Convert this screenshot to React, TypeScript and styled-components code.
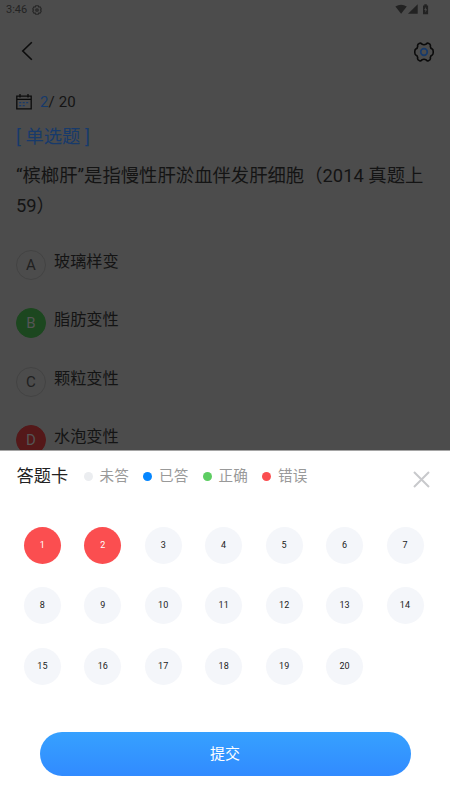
import React from "react";
import styled, { createGlobalStyle } from "styled-components";

const GlobalStyle = createGlobalStyle`
  * { box-sizing: border-box; }
  body { margin: 0; background: #4c4c4c; font-family: Roboto, "Noto Sans CJK SC", sans-serif; }
`;

const Screen = styled.div`
  width: 450px;
  height: 800px;
  overflow: hidden;
  display: flex;
  flex-direction: column;
  background: #4c4c4c;
`;

const Page = styled.main`
  height: 450px;
  flex: none;
  overflow: hidden;
`;

const StatusBar = styled.header`
  height: 19px;
  padding: 0 20px 0 6px;
  display: flex;
  align-items: center;
  color: #232323;
  font-size: 11px;
  svg { display: block; }
`;

const StatusGear = styled.svg`
  margin-left: 4.5px;
`;

const StatusIcons = styled.svg`
  margin-left: auto;
`;

const NavBar = styled.nav`
  height: 65px;
  padding: 0 16px 0 21px;
  display: flex;
  align-items: center;
  justify-content: space-between;
  svg { display: block; }
`;

const BackIcon = styled.svg`
  margin-bottom: 1px;
`;

const Progress = styled.div`
  height: 37px;
  padding: 0 16px 1px;
  display: flex;
  align-items: center;
  color: #141414;
  font-size: 15px;
  letter-spacing: 0.1px;
  svg { margin-right: 8px; }
`;

const Current = styled.span`
  color: #173a6b;
`;

const Kind = styled.div`
  height: 30px;
  padding-left: 16px;
  line-height: 32px;
  font-size: 18.35px;
  color: #173a6b;
`;

const Question = styled.p`
  margin: 10px 0 0;
  padding: 0 16px;
  font-size: 18.35px;
  line-height: 30px;
  color: #141414;
  white-space: nowrap;
`;

const Options = styled.div`
  margin-top: 29px;
  padding-left: 16px;
`;

const Option = styled.div`
  height: 58.3px;
  display: flex;
`;

const optionFill = { plain: "transparent", right: "#1c471f", wrong: "#541819" };

const Letter = styled.span<{ $kind: keyof typeof optionFill }>`
  width: 30px;
  height: 30px;
  border-radius: 50%;
  border: 1px solid ${(p) => (p.$kind === "plain" ? "#434343" : optionFill[p.$kind])};
  background: ${(p) => optionFill[p.$kind]};
  color: ${(p) => (p.$kind === "plain" ? "#202020" : "#555")};
  display: flex;
  align-items: center;
  justify-content: center;
  font-size: 15px;
`;

const OptionText = styled.span`
  margin-left: 8px;
  height: 24px;
  line-height: 24.6px;
  font-size: 16.2px;
  color: #141414;
`;

const Sheet = styled.section`
  flex: 1;
  background: #fff;
  border-top: 1px solid #a5a5a5;
`;

const SheetHead = styled.div`
  height: 50px;
  padding: 0 20.5px 0 16.5px;
  display: flex;
  align-items: center;
`;

const Title = styled.h2`
  margin: 0 16px 0 0;
  font-size: 17.2px;
  line-height: 24px;
  font-weight: 400;
  color: #222;
`;

const LegendItem = styled.span`
  width: 59.5px;
  display: flex;
  align-items: center;
  font-size: 14.6px;
  line-height: 20px;
  color: #999;
  white-space: nowrap;
`;

const Dot = styled.i<{ $color: string }>`
  width: 9px;
  height: 9px;
  flex: none;
  margin: 1px 7px 0 -0.5px;
  border-radius: 50%;
  background: ${(p) => p.$color};
`;

const Close = styled.svg`
  margin: 7px 0 0 auto;
`;

const Grid = styled.div`
  margin: 25.6px 0 0 23.9px;
  display: grid;
  grid-template-columns: repeat(7, 37px);
  column-gap: 23.45px;
  row-gap: 23.5px;
`;

const Cell = styled.span<{ $wrong: boolean }>`
  height: 37px;
  border-radius: 50%;
  display: flex;
  align-items: center;
  justify-content: center;
  padding-bottom: 1px;
  font-size: 9px;
  letter-spacing: 0.1px;
  background: ${(p) => (p.$wrong ? "#fb4e50" : "#f4f6fa")};
  color: ${(p) => (p.$wrong ? "#fff" : "#222")};
`;

const Submit = styled.button`
  display: block;
  width: 371px;
  height: 44.6px;
  margin: 47.1px 0 0 39.5px;
  padding: 0;
  border: 0;
  border-radius: 23px;
  background: linear-gradient(#36a1ff, #318bff);
  color: #fff;
  font: 400 15px/22px Roboto, "Noto Sans CJK SC", sans-serif;
`;

const options: { letter: string; text: string; kind: keyof typeof optionFill }[] = [
  { letter: "A", text: "玻璃样变", kind: "plain" },
  { letter: "B", text: "脂肪变性", kind: "right" },
  { letter: "C", text: "颗粒变性", kind: "plain" },
  { letter: "D", text: "水泡变性", kind: "wrong" },
];

const legend = [
  ["未答", "#ebedf0"],
  ["已答", "#0586ff"],
  ["正确", "#5dcd62"],
  ["错误", "#fb4e50"],
];

export default function App() {
  return (
    <>
      <GlobalStyle />
      <Screen>
        <Page>
          <StatusBar>
            3:46
            <StatusGear width="10" height="10" viewBox="0 0 10 10" fill="none" stroke="#262626">
              <path d="M3.7.8h2.6l.4 1.2 1.4-.1 1.2 2-.8 1.1.8 1.1-1.2 2-1.4-.1-.4 1.2H3.7L3.3 8l-1.4.1-1.2-2L1.5 5 .7 3.9l1.2-2 1.4.1Z" strokeWidth="1.1" />
              <circle cx="5" cy="5" r="1.2" strokeWidth="1.3" />
            </StatusGear>
            <StatusIcons width="35" height="11" viewBox="0 0 35 11" fill="#222">
              <path d="M.4 2.5Q6 -1.2 11.8 2.5L6.1 9.7Z" />
              <path d="M22.7.2v9.6H13Z" />
              <path d="M28 1.4h1.3V.2h2.5v1.2h1.3v8.9H28Z" />
              <path d="m31 2.7-1.8 3.2h1.2v2.7L32 5.3h-1.2Z" fill="#4c4c4c" />
            </StatusIcons>
          </StatusBar>
          <NavBar>
            <BackIcon width="12" height="20" viewBox="0 0 12 20" fill="none" stroke="#0c0c0c" strokeWidth="1.6">
              <path d="M10.8 1.2 1.8 10l9 8.8" />
            </BackIcon>
            <svg width="20" height="20" viewBox="1 0 20 20" fill="none">
              <path
                d="M6.6 1.2Q7.8.7 8.7 2Q11 3.4 13.3 2Q14.2.7 15.4 1.2Q18 2.2 17.3 4.4Q17.4 6.3 19.2 7Q20.3 7.6 20.2 10Q20.3 12.4 19.2 13Q17.4 13.7 17.3 15.6Q18 17.8 15.4 18.8Q14.2 19.3 13.3 18Q11 16.6 8.7 18Q7.8 19.3 6.6 18.8Q4 17.8 4.7 15.6Q4.6 13.7 2.8 13Q1.7 12.4 1.8 10Q1.7 7.6 2.8 7Q4.6 6.3 4.7 4.4Q4 2.2 6.6 1.2Z"
                stroke="#0b0b0b"
                strokeWidth="1.6"
              />
              <circle cx="11" cy="10" r="3.3" stroke="#173a6b" strokeWidth="1.7" />
            </svg>
          </NavBar>
          <Progress>
            <svg width="16" height="16" viewBox="0 0 16 16" fill="none">
              <path d="M.8 2.2h14.4v12.6H.8ZM.8 5.4h14.4M4 0v3.5M12 0v3.5" stroke="#0b0b0b" strokeWidth="1.3" />
              <path d="M3.2 8.6h9.4M3.2 11.6h6" stroke="#173a6b" strokeWidth="1.4" strokeDasharray="2 1.5" />
            </svg>
            <Current>2</Current>/ 20
          </Progress>
          <Kind>[ 单选题 ]</Kind>
          <Question>
            “槟榔肝”是指慢性肝淤血伴发肝细胞（2014 真题上
            <br />
            59）
          </Question>
          <Options>
            {options.map((o) => (
              <Option key={o.letter}>
                <Letter $kind={o.kind}>{o.letter}</Letter>
                <OptionText>{o.text}</OptionText>
              </Option>
            ))}
          </Options>
        </Page>
        <Sheet>
          <SheetHead>
            <Title>答题卡</Title>
            {legend.map(([label, color]) => (
              <LegendItem key={label}>
                <Dot $color={color} />
                {label}
              </LegendItem>
            ))}
            <Close width="17" height="17" viewBox="0 0 17 17" stroke="#c8c9cc" strokeWidth="2">
              <path d="m1 1 15 15M16 1 1 16" />
            </Close>
          </SheetHead>
          <Grid>
            {Array.from({ length: 20 }, (_, i) => (
              <Cell key={i} $wrong={i < 2}>
                {i + 1}
              </Cell>
            ))}
          </Grid>
          <Submit>提交</Submit>
        </Sheet>
      </Screen>
    </>
  );
}
